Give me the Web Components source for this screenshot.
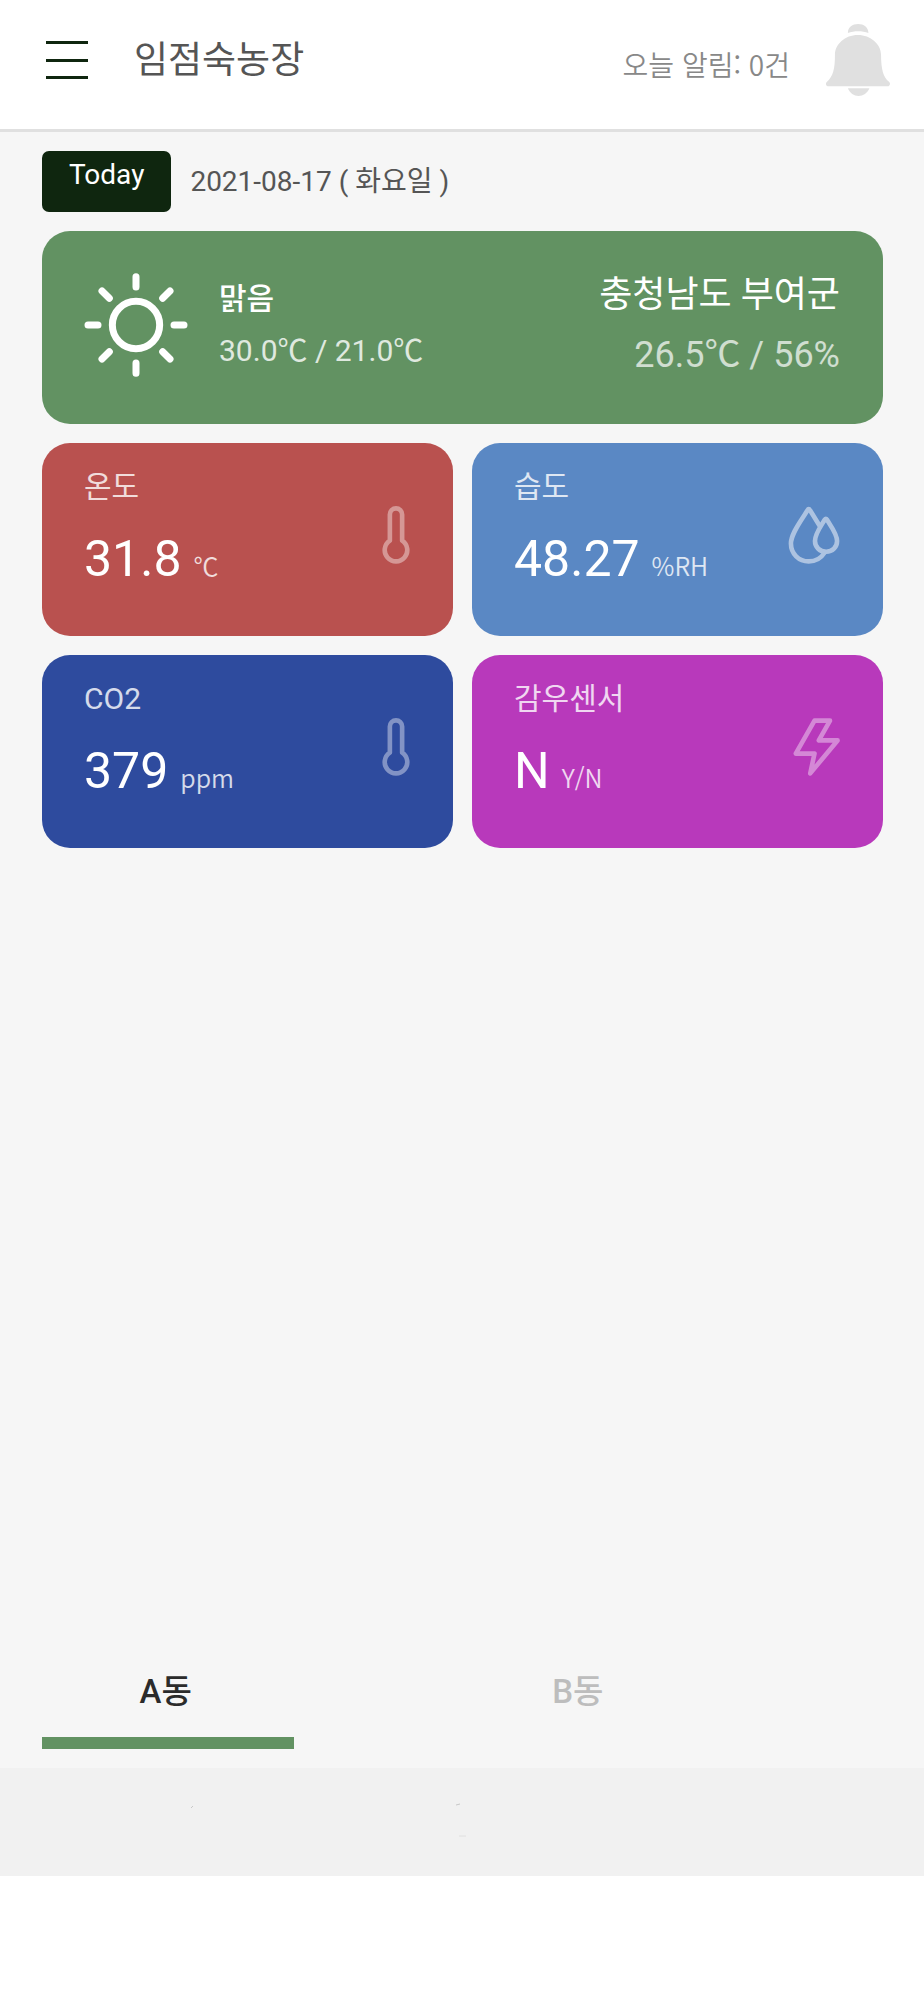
<!DOCTYPE html>
<html lang="ko">
<head>
<meta charset="utf-8">
<meta name="viewport" content="width=device-width, initial-scale=1">
<title>임점숙농장</title>
<style>
  body { margin: 0; background: #fff; font-family: Roboto, "Noto Sans CJK KR", sans-serif; color: #555; }
</style>
</head>
<body>
<farm-app></farm-app>
<script>
const define = (name, html, setup) => {
  const template = document.createElement('template');
  template.innerHTML = html;
  customElements.define(name, class extends HTMLElement {
    constructor() {
      super();
      this.attachShadow({ mode: 'open' }).append(template.content.cloneNode(true));
    }
    connectedCallback() { if (setup) setup(this, this.shadowRoot); }
  });
};

const ICONS = {
  thermometer: '<svg width="28" height="58" viewBox="1149 229 83 175"><path d="M1172 333.500V254.500a18.500 18.500 0 0 1 37 0V333.500A34 34 0 1 1 1172 333.500Z"/></svg>',
  drops: '<svg width="52" height="58" viewBox="980 229 156 176"><path d="M1075 289L1046 242Q1042 235 1038 242C1019 274 988 312 988 343C988 374 1012 397 1042 397C1062 397 1079 388 1089 372M1091 270Q1094 265 1097 270C1109 290 1128 313 1128 335C1128 354 1114 368 1095 368C1076 368 1061 354 1061 335C1061 313 1079 290 1091 270Z"/></svg>',
  bolt: '<svg width="47" height="58" viewBox="991 234 142 176"><path d="M1056 242H1103L1069 302H1126L1043 402L1056 342H999Z"/></svg>'
};

define('farm-header', `
<style>
  :host { display: block; }
  header { display: flex; align-items: center; padding: 24px 34px 33px 46px; background: #fff; border-bottom: 3px solid #e0e0e0; }
  button { display: block; padding: 0; border: 0; background: none; }
  svg { display: block; }
  h1 { flex: 1; margin: 0 0 0 46px; padding-top: 2px; font-size: 37px; line-height: 48px; font-weight: 400; color: #555; }
  p { align-self: flex-end; margin: 0 36px 0 0; font: 350 28px/64px "Noto Sans CJK KR", sans-serif; color: #888; }
</style>
<header>
  <button type="button" aria-label="메뉴"><svg width="42" height="40" viewBox="0 0 42 40" fill="#0f260f"><path d="M0 1h42v3H0zM0 19h42v3H0zM0 36h42v3H0z"/></svg></button>
  <h1><slot></slot></h1>
  <p><slot name="notice"></slot></p>
  <button type="button" aria-label="알림"><svg width="64" height="72" viewBox="1091 71 193 217" fill="#e0e0e0"><path d="M1157 98C1157 80 1171 71 1188 71S1218 80 1219 98C1200 91 1176 91 1157 98Z"/><path d="M1187 104C1226 104 1257 132 1257 164C1257 208 1264 233 1281 245C1287 250 1283 259 1277 259H1098C1091 259 1088 250 1094 245C1112 230 1118 208 1118 164C1118 132 1148 104 1187 104Z"/><path d="M1157 265H1222C1216 280 1203 288 1189 288S1163 280 1157 265Z"/></svg></button>
</header>`);

define('date-row', `
<style>
  :host { display: flex; align-items: center; gap: 19px; }
  button { padding: 8px 27px 21px; border: 0; border-radius: 7px; background: #0f260f; color: #fff; font: 400 28px/32px Roboto, sans-serif; }
  time { font-size: 28px; line-height: 36px; color: #555; }
</style>
<button type="button">Today</button>
<time datetime="2021-08-17"><slot></slot></time>`);

define('weather-card', `
<style>
  :host { display: flex; align-items: center; padding: 34px 43px 39px 42px; border-radius: 28px; background: #629262; color: #fff; }
  svg { display: block; flex: none; margin-right: 31px; }
  div { flex: 1; font-size: 30px; line-height: 52px; }
  .place { font-size: 36px; line-height: 60px; text-align: right; }
  p { margin: 0; }
  .name { font-weight: 500; }
  .place .name { font-weight: 400; }
  .range { opacity: .8; }
  .now { opacity: .7; }
</style>
<svg width="104" height="104" viewBox="251 159 312 312" fill="none" stroke="#fff" stroke-width="21" stroke-linecap="round"><circle cx="407" cy="315" r="71"/><path d="M407 170v31M407 429v31M263 315h30M521 315h30M305 213l22 22M487 395l22 22M509 213l-22 22M327 395l-22 22"/></svg>
<div><p class="name"><slot name="sky"></slot></p><p class="range"><slot name="range"></slot></p></div>
<div class="place"><p class="name"><slot name="place"></slot></p><p class="now"><slot name="now"></slot></p></div>`);

define('sensor-card', `
<style>
  :host { display: flex; align-items: center; box-sizing: border-box; min-height: 193px; padding: 24px 43px 33px 42px; border-radius: 28px; background: var(--tone); color: #fff; }
  .text { flex: 1; align-self: flex-start; }
  h2 { margin: 0 0 28px; font-size: 30px; line-height: 40px; font-weight: 400; opacity: .8; }
  p { margin: 0; font-size: 50px; line-height: 48px; }
  .unit { margin-left: 12px; font: 350 25px/32px "Noto Sans CJK KR", sans-serif; opacity: .8; }
  .icon svg { display: block; fill: none; stroke: #fff; stroke-width: 14; stroke-linejoin: round; stroke-linecap: round; }
  .icon { opacity: .4; }
  :host([icon="drops"]) .icon { opacity: .5; }
</style>
<div class="text"><h2></h2><p><slot></slot><span class="unit"></span></p></div>
<div class="icon"></div>`, (el, root) => {
  root.querySelector('h2').textContent = el.getAttribute('label');
  root.querySelector('.unit').textContent = el.getAttribute('unit');
  root.querySelector('.icon').innerHTML = ICONS[el.getAttribute('icon')];
});

define('zone-tabs', `
<style>
  :host { display: block; }
  div { display: grid; grid-template-columns: 30% 30%; column-gap: 19%; }
  button { padding: 0 5px 25px 0; border: 0; border-bottom: 12px solid transparent; background: none; color: #bdbdbd; font: 500 33px/40px Roboto, "Noto Sans CJK KR", sans-serif; }
  button[aria-selected="true"] { border-color: #629262; color: #2b2b2b; }
</style>
<div role="tablist">
  <button type="button" role="tab" aria-selected="true">A동</button>
  <button type="button" role="tab" aria-selected="false">B동</button>
</div>`);

define('zone-panel', `
<style>
  :host { display: block; background: #f1f1f1; }
  svg { display: block; width: 100%; height: 108px; }
</style>
<svg viewBox="0 0 924 108" stroke="#c8c8c8" fill="none" aria-hidden="true"><path d="M191 40l2-2M456 37l4-1"/><path d="M459 68h7" stroke="#e0e0e0"/></svg>`);

define('farm-app', `
<style>
  :host { display: flex; flex-direction: column; box-sizing: border-box; min-height: 100vh; padding-bottom: 124px; }
  main { flex: 1; display: flex; flex-direction: column; gap: 19px; padding: 19px 41px 19px 42px; background: #f6f6f6; }
  .sensors { display: grid; grid-template-columns: 1fr 1fr; gap: 19px; }
  zone-tabs { margin-top: auto; }
</style>
<farm-header>임점숙농장<span slot="notice">오늘 알림: 0건</span></farm-header>
<main>
  <date-row>2021-08-17 ( 화요일 )</date-row>
  <weather-card>
    <span slot="sky">맑음</span><span slot="range">30.0℃ / 21.0℃</span>
    <span slot="place">충청남도 부여군</span><span slot="now">26.5℃ / 56%</span>
  </weather-card>
  <section class="sensors">
    <sensor-card label="온도" unit="℃" icon="thermometer" style="--tone:#b9514f">31.8</sensor-card>
    <sensor-card label="습도" unit="%RH" icon="drops" style="--tone:#5a88c4">48.27</sensor-card>
    <sensor-card label="CO2" unit="ppm" icon="thermometer" style="--tone:#2e4b9e">379</sensor-card>
    <sensor-card label="감우센서" unit="Y/N" icon="bolt" style="--tone:#b839bb">N</sensor-card>
  </section>
  <zone-tabs></zone-tabs>
</main>
<zone-panel></zone-panel>`);
</script>
</body>
</html>
